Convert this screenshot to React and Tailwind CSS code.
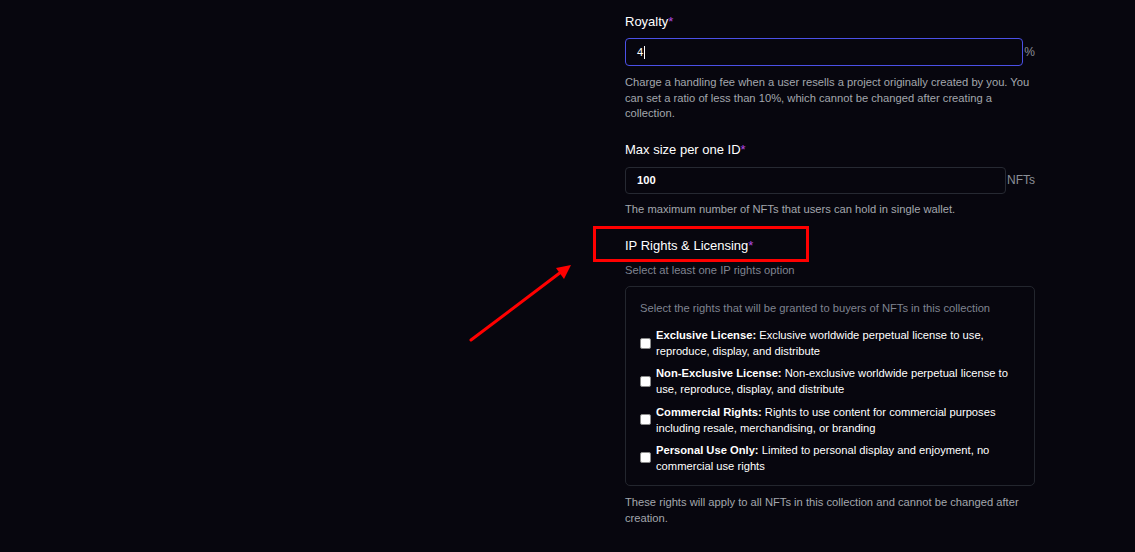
import React from 'react';

const rights = [
    {
        title: 'Exclusive License:',
        text: 'Exclusive worldwide perpetual license to use, reproduce, display, and distribute'
    },
    {
        title: 'Non-Exclusive License:',
        text: 'Non-exclusive worldwide perpetual license to use, reproduce, display, and distribute'
    },
    {
        title: 'Commercial Rights:',
        text: 'Rights to use content for commercial purposes including resale, merchandising, or branding'
    },
    {
        title: 'Personal Use Only:',
        text: 'Limited to personal display and enjoyment, no commercial use rights'
    },
];

function Label({ children }) {
    return (
        <label className="block text-[13px] leading-[20px] text-white">
            {children}
            <span className="text-[#b04ae0]">*</span>
        </label>
    );
}

export default function App() {
    return (
        <div
            className="relative min-h-[552px] h-[552px] overflow-hidden bg-[#07060e] pl-[625px] pt-[12px]"
            style={{ fontFamily: '"Liberation Sans", Arial, sans-serif' }}
        >
            <div className="w-[410px]">
                {/* Royalty */}
                <Label>Royalty</Label>
                <div className="mt-[6px] flex items-center">
                    <div className="flex h-[28px] flex-1 items-center rounded-[4px] border border-[#4b50e6] bg-[#07060e] px-[11px] text-[11.2px] text-white">
                        4<span className="ml-[1px] inline-block h-[13px] w-px bg-white" />
                    </div>
                    <span className="ml-[1px] text-[12px] text-[#8b8f98]">%</span>
                </div>
                <p className="mt-[9px] text-[11.2px] leading-[15.5px] text-[#a3a6ad]">
                    Charge a handling fee when a user resells a project originally created by you. You can set a ratio of less than 10%, which cannot be changed after creating a collection.
                </p>

                {/* Max size */}
                <div className="mt-[18px]">
                    <Label>Max size per one ID</Label>
                </div>
                <div className="mt-[7px] flex items-center">
                    <div className="flex h-[27px] flex-1 items-center rounded-[4px] border border-[#262932] bg-[#07060e] px-[11px] text-[11.2px] font-bold text-white">
                        100
                    </div>
                    <span className="ml-[1px] text-[12px] text-[#8b8f98]">NFTs</span>
                </div>
                <p className="mt-[8px] text-[11.2px] leading-[15.5px] text-[#a3a6ad]">
                    The maximum number of NFTs that users can hold in single wallet.
                </p>

                {/* IP Rights */}
                <div className="mt-[19px]">
                    <Label>IP Rights &amp; Licensing</Label>
                </div>
                <p className="mt-[6px] text-[11.2px] leading-[16px] text-[#7f8390]">
                    Select at least one IP rights option
                </p>

                <div className="mt-[8px] rounded-[5px] border border-[#23262e] px-[14px] pt-[13px] pb-[11px]">
                    <p className="text-[11.2px] leading-[16px] text-[#7f8390]">
                        Select the rights that will be granted to buyers of NFTs in this collection
                    </p>
                    <div className="mt-[11px] flex flex-col gap-[6.3px]">
                        {rights.map((r, i) => (
                            <label key={i} className="flex items-center gap-[5px]">
                                <input
                                    type="checkbox"
                                    className="h-[11px] w-[11px] shrink-0 appearance-none rounded-[2px] border border-[#8a8a8a] bg-white"
                                />
                                <span className="text-[11.2px] leading-[16px] text-white">
                                    <b className="font-bold">{r.title}</b> {r.text}
                                </span>
                            </label>
                        ))}
                    </div>
                </div>

                <p className="mt-[8px] text-[11.2px] leading-[16px] text-[#a3a6ad]">
                    These rights will apply to all NFTs in this collection and cannot be changed after creation.
                </p>
            </div>

            {/* annotation */}
            <div className="pointer-events-none absolute left-[593px] top-[226px] h-[36px] w-[216px] border-[3px] border-[#ff0000]" />
            <svg className="pointer-events-none absolute left-0 top-0" width="1135" height="552">
                <line x1="471" y1="340" x2="561" y2="272" stroke="#ff0000" strokeWidth="3" strokeLinecap="round" />
                <polygon points="571,265 556,268 564,279" fill="#ff0000" />
            </svg>
        </div>
    );
}
